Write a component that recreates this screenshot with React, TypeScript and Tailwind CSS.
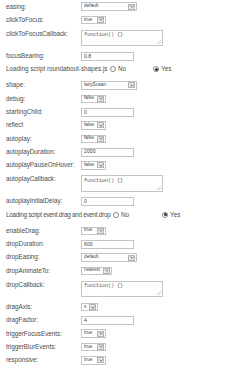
import React from "react";

type Row =
  | { t: "s"; label: string; w: number; v: string }
  | { t: "i"; label: string; v: string }
  | { t: "t"; label: string }
  | { t: "r"; label: string; textW: number; track: number; yesMl: number };

const rows: Row[] = [
  { t: "s", label: "easing:", w: 56, v: "default" },
  { t: "s", label: "clickToFocus:", w: 25, v: "true" },
  { t: "t", label: "clickToFocusCallback:" },
  { t: "i", label: "focusBearing:", v: "0.8" },
  { t: "r", label: "Loading script roundabout-shapes.js", textW: 101, track: 0, yesMl: 27 },
  { t: "s", label: "shape:", w: 56, v: "lazySusan" },
  { t: "s", label: "debug:", w: 25, v: "false" },
  { t: "i", label: "startingChild:", v: "0" },
  { t: "s", label: "reflect", w: 25, v: "false" },
  { t: "s", label: "autoplay:", w: 25, v: "false" },
  { t: "i", label: "autoplayDuration:", v: "2000" },
  { t: "s", label: "autoplayPauseOnHover:", w: 25, v: "false" },
  { t: "t", label: "autoplayCallback:" },
  { t: "i", label: "autoplayInitialDelay:", v: "0" },
  { t: "r", label: "Loading script event.drag and event.drop", textW: 104, track: -0.25, yesMl: 33 },
  { t: "s", label: "enableDrag:", w: 25, v: "true" },
  { t: "i", label: "dropDuration:", v: "600" },
  { t: "s", label: "dropEasing:", w: 56, v: "default" },
  { t: "s", label: "dropAnimateTo:", w: 31, v: "nearest" },
  { t: "t", label: "dropCallback:" },
  { t: "s", label: "dragAxis:", w: 17, v: "x" },
  { t: "i", label: "dragFactor:", v: "4" },
  { t: "s", label: "triggerFocusEvents:", w: 25, v: "true" },
  { t: "s", label: "triggerBlurEvents:", w: 25, v: "true" },
  { t: "s", label: "responsive:", w: 25, v: "true" },
];

function Select({ w, v }: { w: number; v: string }) {
  return (
    <div
      className="flex h-[8.5px] items-center border border-[#c4c4c4] bg-white"
      style={{ width: w }}
    >
      <span className="flex-1 pl-[2px] text-[4.8px] leading-none text-[#444]">{v}</span>
      <span className="mr-[1px] flex h-[6px] w-[7px] items-center justify-center border border-[#b4b4b4] bg-[#e6e6e6]">
        <svg width="4" height="3" viewBox="0 0 4 3">
          <path d="M0.5 0.5 L2 2.3 L3.5 0.5" fill="none" stroke="#666" strokeWidth="0.8" />
        </svg>
      </span>
    </div>
  );
}

function Input({ v }: { v: string }) {
  return (
    <div className="flex h-[9px] w-[52.5px] items-center border border-[#c4c4c4] bg-white pl-[2px] text-[5.2px] leading-none text-[#444]">
      {v}
    </div>
  );
}

function TextArea() {
  return (
    <div className="relative mt-[3.3px] h-[16.5px] w-[82px] border border-[#c4c4c4] bg-white pl-[2px] pt-[2.5px] font-['Liberation_Mono',monospace] text-[5px] leading-none text-[#555]">
      function() {"{}"}
      <svg className="absolute bottom-[1px] right-[1px]" width="4" height="4" viewBox="0 0 4 4">
        <path d="M4 0 L0 4 M4 2 L2 4" stroke="#aaa" strokeWidth="0.6" />
      </svg>
    </div>
  );
}

function Radio({ checked }: { checked?: boolean }) {
  return (
    <span className="inline-flex h-[6px] w-[6px] items-center justify-center rounded-full border border-[#888] bg-white">
      {checked && <span className="h-[3px] w-[3px] rounded-full bg-[#333]" />}
    </span>
  );
}

export default function App() {
  return (
    <div className="h-[375px] w-[250px] bg-white pl-[6px] font-['Liberation_Sans',Arial,sans-serif] text-[6.3px] leading-none text-[#4a4a4a]">
      {rows.map((r, i) => {
        if (r.t === "r") {
          return (
            <div key={i} className="mb-[2.7px] flex h-[13.33px] items-center">
              <span
                className="whitespace-nowrap"
                style={{ width: r.textW, letterSpacing: r.track }}
              >
                {r.label}
              </span>
              <span className="ml-[3px] flex items-center">
                <Radio />
                <span className="ml-[2px]">No</span>
              </span>
              <span className="flex items-center" style={{ marginLeft: r.yesMl }}>
                <Radio checked />
                <span className="ml-[2px]">Yes</span>
              </span>
            </div>
          );
        }
        if (r.t === "t") {
          return (
            <div key={i} className="flex h-[22.8px] items-start">
              <span className="w-[75px] pt-[4px]">{r.label}</span>
              <TextArea />
            </div>
          );
        }
        return (
          <div key={i} className="flex h-[13.33px] items-center">
            <span className="w-[75px]">{r.label}</span>
            {r.t === "s" ? <Select w={r.w} v={r.v} /> : <Input v={r.v} />}
          </div>
        );
      })}
    </div>
  );
}
